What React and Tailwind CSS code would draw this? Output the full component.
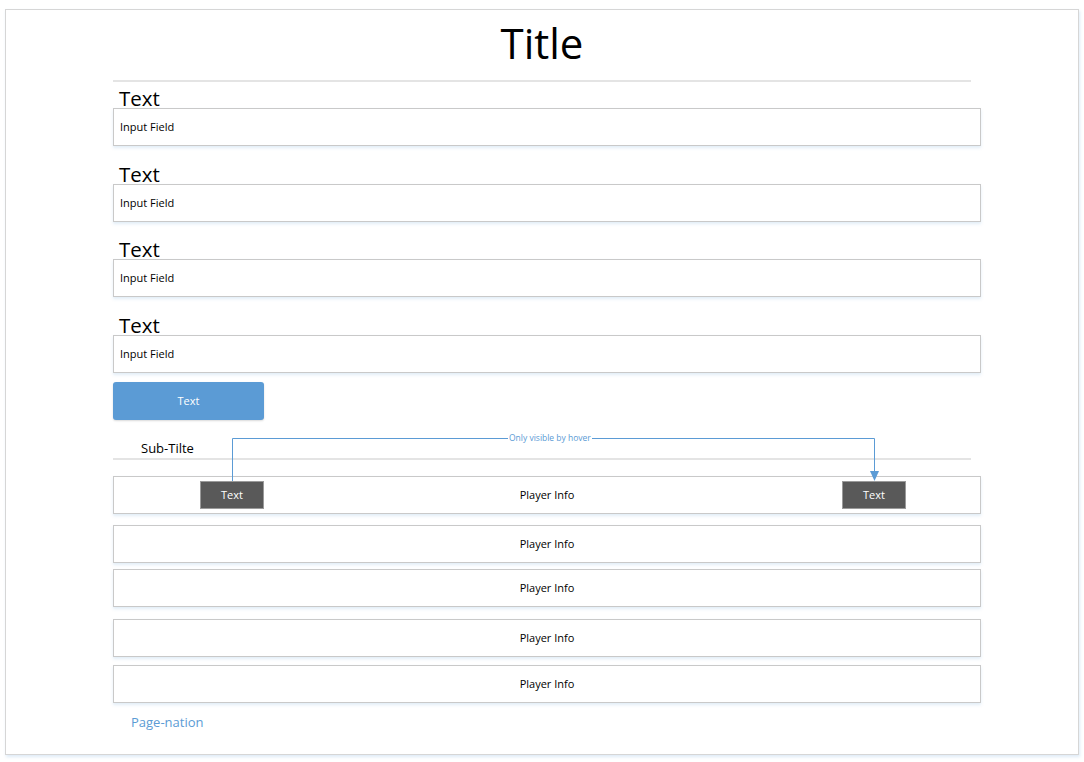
import React from "react";

const font = { fontFamily: '"Open Sans", "Noto Sans", sans-serif' };

const fields = [
  { label: "Text", mt: "" },
  { label: "Text", mt: "mt-[12px]" },
  { label: "Text", mt: "mt-[11px]" },
  { label: "Text", mt: "mt-[12px]" },
];
const players = [
  { mt: "mt-[16px]", hover: true },
  { mt: "mt-[11px]" },
  { mt: "mt-[6px]" },
  { mt: "mt-[12px]" },
  { mt: "mt-[8px]" },
];

const boxCls =
  "border border-[#c9c9c9] bg-white shadow-[0_2px_3px_rgba(91,155,213,0.18)]";

const Field = ({ label, mt }) => (
  <div className={mt}>
    <div className="h-[26px] flex items-end pl-[6px]">
      <span className="text-[20.5px] leading-[20px] text-black">{label}</span>
    </div>
    <div className={`${boxCls} h-[38px] flex items-center pl-[6px]`}>
      <span className="text-[11px] text-black">Input Field</span>
    </div>
  </div>
);

const DarkBtn = () => (
  <div className="w-[64px] h-[28px] bg-[#595959] border border-[#9a9a9a] flex items-center justify-center text-[11px] text-white">
    Text
  </div>
);

const PlayerRow = ({ mt, hover }) => (
  <div className={`${mt} ${boxCls} h-[38px] flex items-center`}>
    {hover ? (
      <>
        <div className="w-[86px]" />
        <DarkBtn />
        <div className="flex-1 text-center pr-[12px] text-[11px] text-black">
          Player Info
        </div>
        <DarkBtn />
        <div className="w-[74px]" />
      </>
    ) : (
      <div className="flex-1 text-center text-[11px] text-black">
        Player Info
      </div>
    )}
  </div>
);

const App = () => {
  return (
    <div className="w-[1084px] h-[762px] bg-white pt-[9px] pl-[5px]" style={font}>
      <div className="w-[1074px] h-[746px] border border-[#d6d6d6] shadow-[1px_2px_3px_rgba(91,155,213,0.2)] bg-white">
        <div className="h-[70px] flex items-center justify-center pb-[4px]">
          <h1 className="text-[42px] leading-none text-black">Title</h1>
        </div>
        <div className="ml-[107px] w-[868px]">
          <div className="w-[858px] h-[2px] bg-[#e4e4e4]" />
          {fields.map((f, i) => (
            <Field key={i} {...f} />
          ))}
          <button className="mt-[9px] w-[151px] h-[38px] rounded-[3px] bg-[#5b9bd5] shadow-[0_1px_2px_rgba(0,0,0,0.15)] text-[11px] text-white">
            Text
          </button>
          <div className="relative">
            <div className="h-[38px] flex items-end pb-[2px] pl-[28px]">
              <span className="text-[13px] leading-[16px] text-black">Sub-Tilte</span>
            </div>
            <div className="w-[858px] h-[2px] bg-[#e4e4e4]" />
            <svg
              className="absolute left-0 top-0 pointer-events-none z-10"
              width="868"
              height="64"
            >
              <path
                d="M119.5 61 V18.5 H761.5 V52"
                fill="none"
                stroke="#5b9bd5"
                strokeWidth="1"
              />
              <path d="M757 51 L766 51 L761.5 61 Z" fill="#5b9bd5" />
            </svg>
            <span className="absolute left-[395px] top-[12px] z-20 bg-white px-[1px] text-[8.5px] leading-[12px] text-[#5b9bd5]">
              Only visible by hover
            </span>
            {players.map((p, i) => (
              <PlayerRow key={i} {...p} />
            ))}
          </div>
          <div className="pl-[18px] mt-[6px]">
            <span className="text-[13px] text-[#5b9bd5]">Page-nation</span>
          </div>
        </div>
      </div>
    </div>
  );
};

export default App;
